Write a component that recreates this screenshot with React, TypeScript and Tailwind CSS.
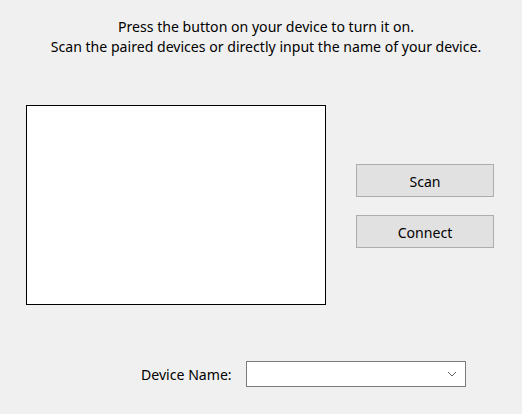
import React from 'react';

const Chevron = () => (
  <svg width="10" height="6" viewBox="0 0 10 6" fill="none" stroke="#5f5f5f" strokeWidth="1">
    <path d="M1 1l4 4 4-4" />
  </svg>
);

export default function App() {
  return (
    <div
      className="w-[522px] h-[414px] bg-[#f0f0f0] text-[14.1px] leading-[20px] text-black flex flex-col"
      style={{ fontFamily: '"Segoe UI", "Noto Sans", sans-serif' }}
    >
      <div className="pt-[17px] pl-[10px] text-center">
        <p>Press the button on your device to turn it on.</p>
        <p>Scan the paired devices or directly input the name of your device.</p>
      </div>

      <div className="flex mt-[48px] pl-[26px]">
        <div className="w-[300px] h-[200px] bg-white border border-black" />
        <div className="flex flex-col gap-[18px] ml-[30px] mt-[59px]">
          <button className="w-[138px] h-[33px] pt-[2px] bg-[#e1e1e1] border border-[#adadad]">Scan</button>
          <button className="w-[138px] h-[33px] pt-[2px] bg-[#e1e1e1] border border-[#adadad]">Connect</button>
        </div>
      </div>

      <div className="flex items-center mt-[56px] pl-[141px]">
        <span className="w-[105px] pt-[2px]">Device Name:</span>
        <div className="w-[220px] h-[26px] bg-white border border-[#7a7a7a] flex items-center justify-end pr-[8px]">
          <Chevron />
        </div>
      </div>
    </div>
  );
}
